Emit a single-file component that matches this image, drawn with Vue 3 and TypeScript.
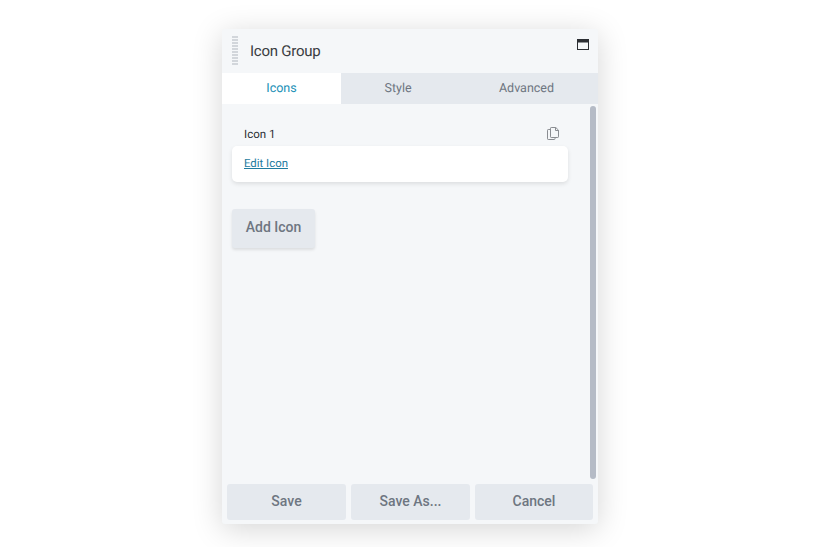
<template>
  <div class="page">
    <div class="panel">
      <header class="head">
        <div class="grip"></div>
        <h1>Icon Group</h1>
        <svg class="win" width="12" height="11" viewBox="0 0 12 11">
          <rect x="0.5" y="0.5" width="11" height="10" fill="none" stroke="#2b2e33" />
          <rect x="0" y="0" width="12" height="3.5" fill="#2b2e33" />
        </svg>
      </header>
      <nav class="tabs">
        <a v-for="t in tabs" :key="t" :class="['tab', { active: t === activeTab }]">{{ t }}</a>
      </nav>
      <div class="body">
        <div class="content">
          <div class="item-head">
            <span>Icon 1</span>
            <svg width="12" height="13" viewBox="0 0 12 13" fill="none" stroke="#8a8d92" stroke-width="1">
              <path d="M3.5 2.5H1.2a.7.7 0 0 0-.7.7v8.6a.7.7 0 0 0 .7.7h6.1a.7.7 0 0 0 .7-.7V10.5" />
              <path d="M4.2.5h4.6l2.7 2.7v6.6a.7.7 0 0 1-.7.7H4.2a.7.7 0 0 1-.7-.7V1.2a.7.7 0 0 1 .7-.7z" />
              <path d="M8.5.5v3h3" />
            </svg>
          </div>
          <div class="item-card"><a class="edit">Edit Icon</a></div>
          <button class="add">Add Icon</button>
        </div>
        <div class="scroll"></div>
      </div>
      <footer class="foot">
        <button v-for="b in actions" :key="b">{{ b }}</button>
      </footer>
    </div>
  </div>
</template>

<script setup lang="ts">
const tabs: string[] = ['Icons', 'Style', 'Advanced']
const activeTab = 'Icons'
const actions: string[] = ['Save', 'Save As...', 'Cancel']
</script>

<style>
html, body { background: #fff; overflow: hidden; }
</style>

<style scoped>
.page {
  width: 836px;
  height: 547px;
  padding: 29px 0 0 222px;
  box-sizing: border-box;
  font-family: Roboto, "Liberation Sans", sans-serif;
  text-rendering: geometricPrecision;
}

.panel {
  width: 376px;
  height: 495px;
  display: flex;
  flex-direction: column;
  background: #f5f7f9;
  border-radius: 3px;
  box-shadow: 0 5px 30px rgba(0, 0, 0, 0.17);
}

.head {
  height: 44px;
  flex: none;
  display: flex;
  align-items: center;
  padding: 0 9px 0 10px;
}
.grip {
  width: 6px;
  height: 30px;
  margin-right: 12px;
  background: repeating-linear-gradient(to bottom, #d2d6db 0 2px, #f5f7f9 2px 3px);
}
.head h1 {
  flex: 1;
  margin: 0 0 1px;
  font-size: 15px;
  font-weight: 400;
  letter-spacing: -0.25px;
  color: #3a3d42;
}
.win { margin-top: -14px; }

.tabs {
  height: 31px;
  flex: none;
  display: grid;
  grid-template-columns: 119px 114px 1fr;
  background: #e5e9ee;
}
.tab {
  display: flex;
  align-items: center;
  justify-content: center;
  padding-bottom: 1px;
  font-size: 12.5px;
  color: #6e7681;
}
.tab.active { background: #fff; color: #1a8fb6; }

.body {
  flex: 1;
  display: flex;
  min-height: 0;
  padding: 2px 2px 0 0;
}
.content {
  flex: 1;
  padding: 20px 22px 0 10px;
}
.item-head {
  display: flex;
  align-items: center;
  justify-content: space-between;
  padding: 0 9px 0 12px;
  height: 15px;
  font-size: 11.5px;
  color: #2b2e33;
}
.item-head svg { margin-top: -1px; }
.item-card {
  height: 36px;
  margin-top: 5px;
  padding: 0 12px 2px;
  box-sizing: border-box;
  display: flex;
  align-items: center;
  background: #fff;
  border-radius: 5px;
  box-shadow: 0 2px 4px rgba(0, 0, 0, 0.1);
}
.edit {
  font-size: 11.4px;
  color: #1f7c9f;
  text-decoration: underline;
}
.add {
  display: block;
  width: 83px;
  height: 39px;
  margin-top: 27px;
  padding: 0 0 3px;
  border: 0;
  border-radius: 3px;
  background: #e5e9ee;
  box-shadow: 0 2px 3px rgba(0, 0, 0, 0.1);
  font: 500 14px Roboto, "Liberation Sans", sans-serif;
  color: #6e7681;
}
.scroll {
  width: 6px;
  height: 373px;
  border-radius: 3px;
  background: #b5bbc6;
}

.foot {
  flex: none;
  display: grid;
  grid-template-columns: 119px 119px 118px;
  gap: 5px;
  padding: 5px 5px 4px;
}
.foot button {
  height: 36px;
  padding: 0 0 2px;
  border: 0;
  border-radius: 3px;
  background: #e5e9ee;
  font: 500 14px Roboto, "Liberation Sans", sans-serif;
  color: #6e7681;
}
</style>
